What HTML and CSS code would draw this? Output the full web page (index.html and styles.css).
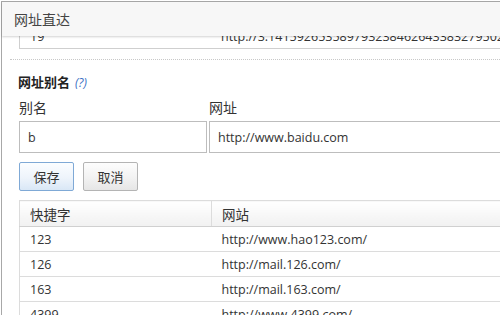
FILE: index.html
```html
<!DOCTYPE html>
<html lang="zh-CN">
<head>
    <meta charset="UTF-8">
    <title>网址直达</title>
    <link rel="stylesheet" href="styles.css">
</head>
<body>
    <div class="frame">
        <div class="header">网址直达</div>
        <div class="panel">
            <div class="scroller">
                <table class="grid prev">
                    <tr>
                        <td class="col-key">19</td>
                        <td>http://3.1415926535897932384626433832795028841971</td>
                    </tr>
                </table>

                <div class="divider"></div>

                <div class="section">
                    <h2>网址别名 <span class="help">(?)</span></h2>
                    <div class="form-row">
                        <label class="field field-alias">
                            <span class="field-label">别名</span>
                            <input type="text" value="b">
                        </label>
                        <label class="field field-url">
                            <span class="field-label">网址</span>
                            <input type="text" value="http://www.baidu.com">
                        </label>
                    </div>
                    <div class="actions">
                        <button class="btn btn-primary">保存</button>
                        <button class="btn">取消</button>
                    </div>

                    <table class="grid list">
                        <thead>
                            <tr>
                                <th class="col-key">快捷字</th>
                                <th>网站</th>
                            </tr>
                        </thead>
                        <tbody>
                            <tr><td class="col-key">123</td><td>http://www.hao123.com/</td></tr>
                            <tr><td class="col-key">126</td><td>http://mail.126.com/</td></tr>
                            <tr><td class="col-key">163</td><td>http://mail.163.com/</td></tr>
                            <tr><td class="col-key">4399</td><td>http://www.4399.com/</td></tr>
                        </tbody>
                    </table>
                </div>
            </div>
        </div>
    </div>
</body>
</html>
```

FILE: styles.css
```css
:root {
    --frame-border: #a8a8a8;
    --line-color: #dcdcdc;
    --input-border: #bdbdbd;
    --text-color: #333333;
    --link-color: #3a6fc4;
}

html, body {
    margin: 0;
    padding: 0;
    height: 100%;
    overflow: hidden;
    background: #ffffff;
}

body {
    font-family: "Open Sans", "Noto Sans CJK SC", sans-serif;
    color: var(--text-color);
    font-size: 12px;
}

.frame {
    margin: 1px 0 0 1px;
    width: 560px;
    height: 400px;
    border-left: 1px solid var(--frame-border);
    border-top: 1px solid var(--frame-border);
    display: flex;
    flex-direction: column;
}

.header {
    position: relative;
    z-index: 2;
    height: 34px;
    line-height: 34px;
    padding-left: 12px;
    font-family: "Noto Sans CJK SC", sans-serif;
    font-size: 14px;
    color: #444444;
    background: #f7f7f7;
    box-shadow: 0 1px 2px rgba(0, 0, 0, 0.18);
}

.panel {
    flex: 1;
    overflow: hidden;
}

.scroller {
    margin-top: -12px;
}

/* tables */
.grid {
    border-collapse: collapse;
    margin-left: 17px;
    width: 543px;
    table-layout: fixed;
}

.grid td,
.grid th {
    height: 24px;
    padding: 0 0 0 10px;
    text-align: left;
    font-weight: normal;
    border-bottom: 1px solid var(--line-color);
    white-space: nowrap;
    overflow: hidden;
}

.grid td {
    font-size: 12.5px;
}

.grid .col-key {
    width: 181px;
}

.prev {
    border-left: 1px solid #cfcfcf;
}

.prev td {
    border-bottom-color: #cfcfcf;
}

.divider {
    margin: 10px 0 0 8px;
    border-top: 1px dotted #c8c8c8;
}

.section {
    padding-top: 12px;
}

h2 {
    margin: 0 0 0 16px;
    font-family: "Noto Sans CJK SC", sans-serif;
    font-size: 13px;
    font-weight: bold;
    line-height: 20px;
    color: #222222;
}

.help {
    margin-left: 2px;
    font-family: "Open Sans", sans-serif;
    font-style: italic;
    font-weight: normal;
    color: var(--link-color);
    font-size: 12px;
}

.form-row {
    display: flex;
    margin: 3px 0 0 17px;
    gap: 2px;
}

.field {
    display: flex;
    flex-direction: column;
}

.field-label {
    font-family: "Noto Sans CJK SC", sans-serif;
    font-size: 14px;
    line-height: 22px;
    margin-bottom: 3px;
}

.field-alias input {
    width: 188px;
}

.field-url input {
    width: 330px;
}

.field input {
    box-sizing: border-box;
    height: 32px;
    margin: 0;
    padding: 0 8px;
    border: 1px solid var(--input-border);
    font-family: "Open Sans", sans-serif;
    font-size: 12.5px;
    color: #333333;
    outline: none;
}

.actions {
    display: flex;
    gap: 9px;
    margin: 9px 0 0 17px;
}

.btn {
    box-sizing: border-box;
    width: 55px;
    height: 29px;
    padding: 0;
    border: 1px solid #b4b4b4;
    border-radius: 2px;
    background: linear-gradient(180deg, #fdfdfd 0%, #f2f2f2 55%, #e6e6e6 100%);
    font-family: "Noto Sans CJK SC", sans-serif;
    font-size: 13px;
    color: #333333;
}

.btn-primary {
    border-color: #7fa9d6;
    background: linear-gradient(180deg, #fbfdff 0%, #eef4fb 55%, #d9e7f6 100%);
}

.list {
    margin-top: 9px;
    border-top: 1px solid var(--line-color);
}

.list th {
    height: 25px;
    font-family: "Noto Sans CJK SC", sans-serif;
    font-size: 13.5px;
    background: linear-gradient(180deg, #ffffff 0%, #f1f1f1 100%);
    border-bottom: 1px solid #d0d0d0;
}

.list th.col-key {
    border-right: 1px solid var(--line-color);
    border-left: 1px solid var(--line-color);
}

.list td.col-key {
    border-left: 1px solid var(--line-color);
}
```
